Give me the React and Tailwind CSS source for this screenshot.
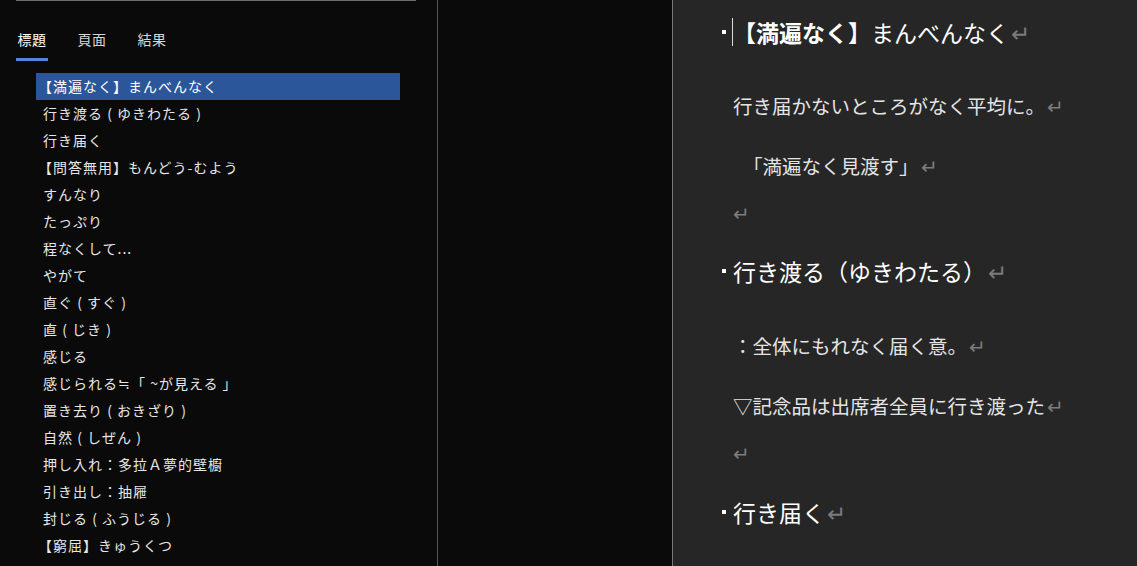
import React from "react";

const items = [
  "【満遍なく】まんべんなく",
  "行き渡る ( ゆきわたる )",
  "行き届く",
  "【問答無用】もんどう-むよう",
  "すんなり",
  "たっぷり",
  "程なくして...",
  "やがて",
  "直ぐ ( すぐ )",
  "直 ( じき )",
  "感じる",
  "感じられる≒「 ~が見える 」",
  "置き去り ( おきざり )",
  "自然 ( しぜん )",
  "押し入れ：多拉Ａ夢的壁櫥",
  "引き出し：抽屜",
  "封じる ( ふうじる )",
  "【窮屈】きゅうくつ",
  "揺らぐ ( ゆらぐ )",
];

const Ret = () => <span className="text-[#7c7c7c] font-normal ml-[2px]">↵</span>;

function Heading({ children, caret }) {
  return (
    <div className="h-[40px] flex items-center -ml-[11px] text-[23px] text-white">
      <span className="w-[4px] h-[4px] bg-white mr-[6px] shrink-0" />
      {caret ? <span className="w-px h-[28px] bg-[#dcdcdc] shrink-0" /> : <span className="w-px h-[28px] shrink-0" />}
      <span className="whitespace-nowrap">{children}</span>
    </div>
  );
}

function Body({ children }) {
  return (
    <div className="h-[40px] flex items-center text-[19.5px] text-[#e4e4e4] whitespace-nowrap">
      {children}
    </div>
  );
}

export default function App() {
  return (
    <div
      className="w-[1137px] h-[566px] flex overflow-hidden bg-[#0a0a0a]"
      style={{ fontFamily: '"Noto Sans CJK JP", "Noto Sans", sans-serif' }}
    >
      {/* Navigation pane */}
      <div className="w-[438px] h-full border-r border-[#555555] bg-[#0a0a0a] shrink-0 flex flex-col">
        <div className="ml-[16px] w-[400px] h-[4px] bg-[#404040] border-x border-b border-[#6e6e6e]" />
        <div className="flex pl-[16px] gap-[28px]">
          {["標題", "頁面", "結果"].map((t, i) => (
            <div key={t} className="w-[32px] flex flex-col items-center pt-[28px]">
              <span className={`text-[14px] leading-[20px] tracking-[0.5px] ${i === 0 ? "text-white" : "text-[#d6d6d6]"}`}>{t}</span>
              <span className={`mt-[9px] w-[32px] h-[3px] ${i === 0 ? "bg-[#4f86d9]" : ""}`} />
            </div>
          ))}
        </div>
        <div className="mt-[12px] pl-[36px] flex flex-col">
          {items.map((t, i) => (
            <div
              key={i}
              className={`w-[364px] h-[27px] flex items-center pl-[7px] text-[14px] tracking-[1px] whitespace-nowrap ${
                i === 0 ? "bg-[#2b579a] text-white" : "text-[#e6e6e6]"
              }`}
            >
              <span className={t.startsWith("【") ? "-ml-[5px]" : ""}>{t}</span>
            </div>
          ))}
        </div>
      </div>

      {/* Gap area */}
      <div className="w-[235px] h-full border-r border-[#7a7a7a] bg-[#0a0a0a] shrink-0" />

      {/* Document page */}
      <div className="flex-1 h-full bg-[#262626] pl-[60px] pt-[12px] flex flex-col">
        <Heading caret>
          <span className="font-bold">【満遍なく】</span>まんべんなく<Ret />
        </Heading>
        <div className="mt-[34px]">
          <Body>
            行き届かないところがなく平均に。<Ret />
          </Body>
        </div>
        <div className="mt-[20px] ml-[10px]">
          <Body>
            「満遍なく見渡す」<Ret />
          </Body>
        </div>
        <div className="mt-[7px]">
          <Body>
            <span className="text-[#7c7c7c]">↵</span>
          </Body>
        </div>
        <div className="mt-[18px]">
          <Heading>
            行き渡る（ゆきわたる）<Ret />
          </Heading>
        </div>
        <div className="mt-[35px]">
          <Body>
            ：全体にもれなく届く意。<Ret />
          </Body>
        </div>
        <div className="mt-[20px]">
          <Body>
            ▽記念品は出席者全員に行き渡った<Ret />
          </Body>
        </div>
        <div className="mt-[7px]">
          <Body>
            <span className="text-[#7c7c7c]">↵</span>
          </Body>
        </div>
        <div className="mt-[19px]">
          <Heading>
            行き届く<Ret />
          </Heading>
        </div>
      </div>
    </div>
  );
}
